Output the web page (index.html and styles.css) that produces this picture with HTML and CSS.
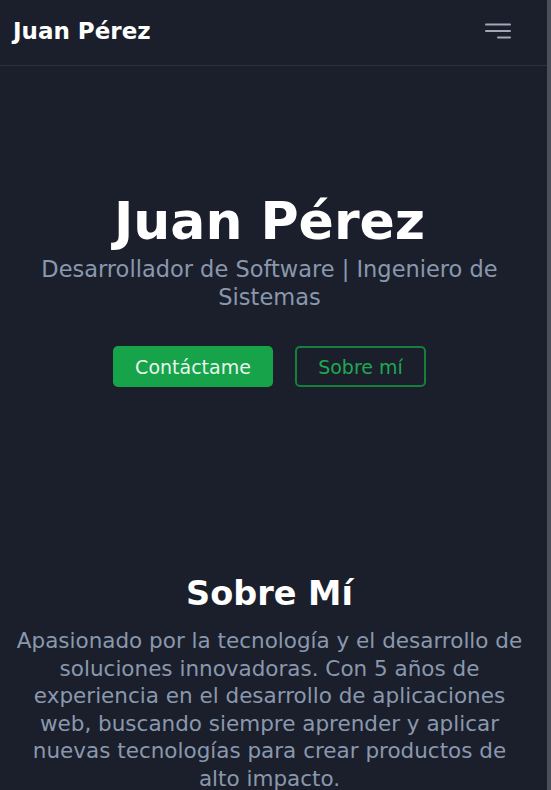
FILE: index.html
```html
<!DOCTYPE html>
<html lang="es">
<head>
<meta charset="utf-8">
<title>Juan Pérez</title>
<link rel="stylesheet" href="styles.css">
</head>
<body>
<div class="page">
  <header class="nav">
    <span class="brand">Juan Pérez</span>
    <button class="menu" aria-label="Menú">
      <svg width="26" height="16" viewBox="0 0 26 16"><path d="M1 1.5h24M1 8h24M13 14.5h12" stroke="#a0a8b8" stroke-width="2" stroke-linecap="round" fill="none"/></svg>
    </button>
  </header>
  <section class="hero">
    <h1 class="hero-title">Juan Pérez</h1>
    <p class="hero-sub">Desarrollador de Software | Ingeniero de Sistemas</p>
    <div class="actions">
      <a class="btn btn-primary" href="#contacto">Contáctame</a>
      <a class="btn btn-outline" href="#sobre">Sobre mí</a>
    </div>
  </section>
  <section class="about" id="sobre">
    <h2 class="about-title">Sobre Mí</h2>
    <p class="about-text">Apasionado por la tecnología y el desarrollo de soluciones innovadoras. Con 5 años de experiencia en el desarrollo de aplicaciones web, buscando siempre aprender y aplicar nuevas tecnologías para crear productos de alto impacto.</p>
  </section>
</div>
</body>
</html>
```
FILE: styles.css
```css
html, body {
  margin: 0;
  padding: 0;
  background: #1a1f2b;
  height: 100%;
  overflow: hidden;
}
body {
  font-family: "DejaVu Sans", "Open Sans", sans-serif;
  color: #ffffff;
}
.page {
  width: 547px;
  height: 790px;
  border-right: 4px solid #4a4f5a;
  overflow: hidden;
}
.nav {
  height: 66px;
  box-sizing: border-box;
  border-bottom: 1px solid #2a303c;
  display: flex;
  align-items: center;
  justify-content: space-between;
  padding: 0 36px 0 13px;
}
.brand {
  font-size: 23px;
  font-weight: 700;
  margin-top: -4px;
}
.menu {
  background: none;
  border: 0;
  padding: 0;
  display: flex;
  margin-top: -4px;
}
.hero {
  text-align: center;
  padding: 125px 20px 0 12px;
}
.hero-title {
  margin: 0;
  font-size: 52px;
  font-weight: 700;
  line-height: 60px;
}
.hero-sub {
  margin: 4px 0 0;
  font-size: 22.5px;
  line-height: 28px;
  color: #8a98ae;
}
.actions {
  display: flex;
  justify-content: center;
  gap: 22px;
  margin-top: 35px;
}
.btn {
  display: flex;
  align-items: center;
  justify-content: center;
  height: 41px;
  box-sizing: border-box;
  border-radius: 5px;
  font-size: 19px;
  text-decoration: none;
}
.btn-primary {
  width: 160px;
  background: #16a34a;
  color: #e8f5ec;
}
.btn-outline {
  width: 131px;
  border: 2px solid #15803d;
  color: #1fa852;
}
.about {
  text-align: center;
  padding: 186px 20px 0 12px;
}
.about-title {
  margin: 0;
  font-size: 33.5px;
  font-weight: 700;
  line-height: 42px;
}
.about-text {
  margin: 12px 0 0;
  font-size: 21.5px;
  line-height: 27.6px;
  color: #8a98ae;
}
```
